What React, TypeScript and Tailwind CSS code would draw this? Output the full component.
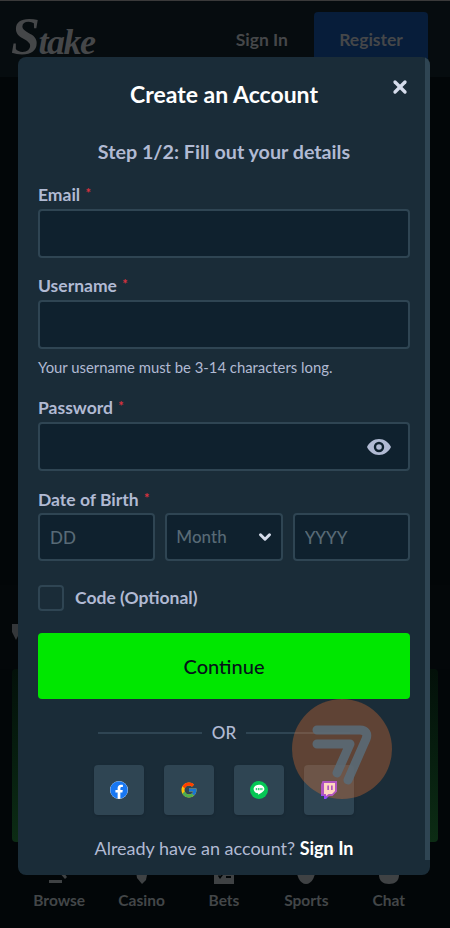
import React, { useState } from 'react';
import { ChevronDown, X } from 'lucide-react';
import { FaFacebook } from 'react-icons/fa';
import { FcGoogle } from 'react-icons/fc';

const FONT = "font-['Lato','Open_Sans',sans-serif]";

function Label({ text, htmlFor }: { text: string; htmlFor?: string }) {
  return (
    <label htmlFor={htmlFor} className="block text-[17.5px] leading-5 font-bold text-[#b1bad3]">
      {text} <span className="relative -top-[3px] ml-[1px] text-[13px] text-[#d8323f]">*</span>
    </label>
  );
}

function Field({ id, type = 'text', children }: { id: string; type?: string; children?: React.ReactNode }) {
  return (
    <div className="relative mt-[3px]">
      <input
        id={id}
        type={type}
        className="block h-[49px] w-full rounded-[4px] border-2 border-[#2f4553] bg-[#0f212e] px-3 text-white outline-none"
      />
      {children}
    </div>
  );
}

function EyeIcon() {
  return (
    <svg width="24" height="16" viewBox="0 0 24 16" className="absolute right-[19px] top-[17px]">
      <path
        fill="#b1bad3"
        fillRule="evenodd"
        d="M12 0C6.6 0 2.3 3.3 0 8c2.3 4.7 6.6 8 12 8s9.7-3.3 12-8c-2.3-4.700-6.600-8-12-8Zm0 13.200A5.200 5.200 0 1 1 12 2.800a5.200 5.200 0 0 1 0 10.400Zm0-2.400a2.800 2.800 0 1 0 0-5.600 2.800 2.800 0 0 0 0 5.600Z"
      />
    </svg>
  );
}

function LineIcon() {
  return (
    <svg width="18" height="18" viewBox="0 0 18 18">
      <circle cx="9" cy="9" r="9" fill="#06c755" />
      <path fill="#fff" d="M9 3.700c-3 0-5.400 1.900-5.400 4.300 0 2.100 1.800 3.900 4.300 4.200.4.100.3.500.2 1-.1.400.2.500.6.300 1.500-.9 5.700-3 5.700-5.500 0-2.400-2.400-4.300-5.400-4.300Z" />
      <rect x="5.800" y="7" width="1" height="2.200" fill="#06c755" />
      <rect x="7.800" y="7" width="1" height="2.200" fill="#06c755" />
      <rect x="9.600" y="7" width="1" height="2.200" fill="#06c755" />
      <rect x="11.400" y="7" width="1" height="2.200" fill="#06c755" />
    </svg>
  );
}

function TwitchIcon() {
  return (
    <svg width="16" height="18" viewBox="0 0 16 18">
      <path fill="#9146ff" d="M1.500 0H16v10.500L11.500 15H8l-3 3H3v-3H0V3.500L1.500 0Z" />
      <path fill="#fff" d="M3 2h11v8l-3 3H7.500L5 15v-2H3V2Z" />
      <rect x="6.300" y="4.500" width="1.700" height="4.500" fill="#9146ff" />
      <rect x="10" y="4.500" width="1.700" height="4.500" fill="#9146ff" />
    </svg>
  );
}

function SocialButton({ children }: { children: React.ReactNode }) {
  return (
    <button className="flex h-[50px] w-[50px] items-center justify-center rounded-[4px] bg-[#2f4553] shadow-sm">
      {children}
    </button>
  );
}

const navItems = [
  { label: 'Browse', icon: <path d="M2 2h10v3H2zM2 10h8v3H2zM2 18h13v3H2zM13 6l7 9-2 2-7-8z" /> },
  { label: 'Casino', icon: <path d="M5 3h14l-3 15-4 4-5-6z" /> },
  { label: 'Bets', icon: <path fillRule="evenodd" d="M2 2h20v20H2zM6 14l2 3 3-4-1-1-2 2-1-1zM14 14h5v2h-5z" /> },
  { label: 'Sports', icon: <path d="M2 3h20c0 11-4 19-10 19S2 14 2 3z" /> },
  { label: 'Chat', icon: <path d="M2 2h20v11c0 6-4 9-10 9S2 19 2 13z" /> },
];

function Background() {
  return (
    <div className="flex h-[928px] flex-col border-t border-[#3a3a3a] bg-[#020608]">
      <header className="flex h-[76px] shrink-0 bg-[#060c0f] pl-[11px] pr-[22px] pt-[11px]">
        <span className="font-['Liberation_Serif',serif] text-[36px] leading-[50px] font-bold tracking-[-1.500px] text-[#454749] italic">
          <span className="text-[52px]">S</span>take
        </span>
        <span className="ml-auto mr-[26px] pt-[18px] text-[17.5px] leading-5 font-bold text-[#454749]">Sign In</span>
        <span className="flex h-[56px] w-[114px] items-center justify-center rounded-[4px] bg-[#071d3a] text-[17.5px] font-bold text-[#454749]">
          Register
        </span>
      </header>
      <div className="h-[508px] shrink-0" />
      <div className="flex h-[84px] shrink-0 items-end bg-[#030709] pb-[29px] pl-[12px]">
        <svg width="8" height="16" viewBox="0 0 8 16">
          <path fill="#34373a" d="M0 0h8v8l-4 8-4-8z" />
        </svg>
      </div>
      <div className="mx-[12px] h-[173px] shrink-0 rounded-[4px] bg-linear-to-b from-[#031009] to-[#0c2c14]" />
      <nav className="grid flex-1 grid-cols-5 pl-[18px] pr-[20px] pt-[20px]">
        {navItems.map((item) => (
          <div key={item.label} className="flex flex-col items-center">
            <svg width="24" height="24" viewBox="0 0 24 24" fill="#3f4244">
              {item.icon}
            </svg>
            <span className="mt-[4px] text-[15.500px] leading-5 font-bold text-[#434648]">{item.label}</span>
          </div>
        ))}
      </nav>
    </div>
  );
}

export default function App() {
  const [code, setCode] = useState(false);

  return (
    <div className={`relative h-[928px] w-[450px] overflow-hidden ${FONT}`}>
      <Background />

      {/* Modal */}
      <div className="absolute left-[18px] top-[57px] flex h-[818px] w-[412px] overflow-hidden rounded-[8px] bg-[#1a2c38]">
        <div className="relative w-[407px] pl-[20px] pr-[15px] pt-[23px]">
          <button className="absolute right-[15px] top-[20px] text-[#d5dceb]">
            <X size={20} strokeWidth={4} />
          </button>
          <h2 className="text-center text-[23px] leading-7 font-bold text-white">Create an Account</h2>
          <p className="mt-[32px] text-center text-[19.700px] leading-6 font-bold text-[#b1bad3]">
            Step 1/2: Fill out your details
          </p>

          <div className="mt-[21px]">
            <Label text="Email" htmlFor="email" />
            <Field id="email" type="email" />
          </div>
          <div className="mt-[18px]">
            <Label text="Username" htmlFor="username" />
            <Field id="username" />
            <p className="mt-[8px] text-[14.850px] leading-5 font-normal text-[#b1bad3]">
              Your username must be 3-14 characters long.
            </p>
          </div>
          <div className="mt-[21px]">
            <Label text="Password" htmlFor="password" />
            <Field id="password" type="password">
              <EyeIcon />
            </Field>
          </div>

          <div className="mt-[19px]">
            <Label text="Date of Birth" />
            <div className="mt-[2px] grid grid-cols-3 gap-[10px]">
              <input
                placeholder="DD"
                className="h-[48px] w-full rounded-[4px] border-2 border-[#2f4553] bg-[#0f212e] px-[10px] text-[17px] font-medium outline-none placeholder:text-[#586a76]"
              />
              <div className="relative">
                <select className="h-[48px] w-full appearance-none rounded-[4px] border-2 border-[#2f4553] bg-[#0f212e] px-[9px] text-[17px] font-medium text-[#586a76] outline-none">
                  <option>Month</option>
                </select>
                <ChevronDown
                  size={18}
                  strokeWidth={4}
                  className="pointer-events-none absolute right-[9px] top-[15px] text-[#d5dceb]"
                />
              </div>
              <input
                placeholder="YYYY"
                className="h-[48px] w-full rounded-[4px] border-2 border-[#2f4553] bg-[#0f212e] px-[10px] text-[17px] font-medium outline-none placeholder:text-[#586a76]"
              />
            </div>
          </div>

          <label className="mt-[23px] flex items-center gap-[11px]">
            <input
              type="checkbox"
              checked={code}
              onChange={(e) => setCode(e.target.checked)}
              className="h-[26px] w-[26px] appearance-none rounded-[4px] border-2 border-[#2f4553] bg-[#1a2c38]"
            />
            <span className="pt-[1px] text-[17.500px] font-bold text-[#b1bad3]">Code (Optional)</span>
          </label>

          <button className="mt-[22px] block h-[66px] w-full rounded-[4px] bg-[#00e700] text-[20px] font-medium text-[#05121a]">
            Continue
          </button>

          <div className="mt-[24px] flex items-center justify-center gap-[10px]">
            <div className="h-[2px] w-[104px] bg-[#2f4553]" />
            <span className="text-[17px] leading-5 font-medium text-[#b1bad3]">OR</span>
            <div className="h-[2px] w-[104px] bg-[#2f4553]" />
          </div>

          <div className="mt-[22px] flex justify-center gap-[20px]">
            <SocialButton>
              <span className="flex h-[18px] w-[18px] items-center justify-center rounded-full bg-white">
                <FaFacebook size={18} color="#1877f2" />
              </span>
            </SocialButton>
            <SocialButton>
              <FcGoogle size={18} />
            </SocialButton>
            <SocialButton>
              <LineIcon />
            </SocialButton>
            <SocialButton>
              <TwitchIcon />
            </SocialButton>
          </div>

          <p className="mt-[23px] text-center text-[18px] leading-5 text-[#b1bad3]">
            Already have an account? <span className="font-bold text-white">Sign In</span>
          </p>
        </div>
        <div className="h-[803px] w-[5px] bg-[#2f4553]" />
      </div>

      {/* Floating widget */}
      <div className="absolute left-[292px] top-[699px] h-[100px] w-[100px] rounded-full bg-[#ff7a2f]/30 pl-[20px] pt-[20px]">
        <svg width="64" height="70" viewBox="0 0 64 70" fill="none" stroke="#5a6a75" strokeOpacity="0.9" strokeWidth="9" strokeLinecap="round" strokeLinejoin="round">
          <path d="M5 11h43c6 0 8 4 6 9L36 61" />
          <path d="M5 25h33L25 54" />
        </svg>
      </div>
    </div>
  );
}
